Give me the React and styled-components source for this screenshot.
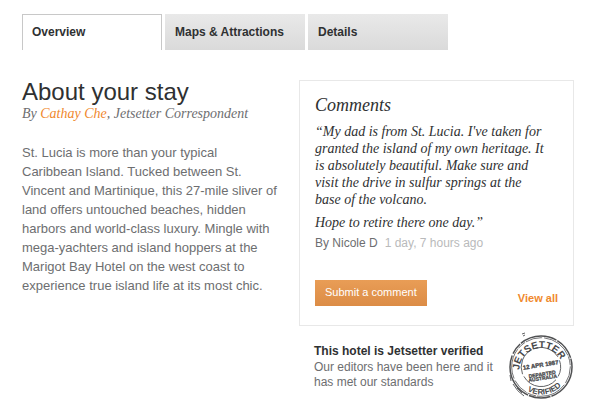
import { useState } from 'react';
import styled, { createGlobalStyle } from 'styled-components';

const GlobalStyle = createGlobalStyle`
  * {
    box-sizing: border-box;
  }

  body {
    margin: 0;
    background: #fff;
    color: #6d6e70;
    font-family: "Liberation Sans", Arial, sans-serif;
    font-size: 13px;
  }
`;

const Page = styled.div`
  padding: 14px 19px 0 22px;
`;

const TabList = styled.div`
  display: flex;
  gap: 3px;
`;

const Tab = styled.button`
  flex: 0 0 140px;
  height: 36px;
  padding: 0 9px 2px;
  border: 1px solid ${({ $active }) => ($active ? '#c8c8c8' : 'transparent')};
  border-bottom: 0;
  background: ${({ $active }) =>
    $active ? '#fff' : 'linear-gradient(#e9e9e9, #dadada) border-box'};
  color: #2f3132;
  font: bold 12px "Liberation Sans", Arial, sans-serif;
  text-align: left;
  cursor: pointer;
`;

const Columns = styled.main`
  display: grid;
  grid-template-columns: minmax(0, 1fr) 275px;
  gap: 16px;
  padding-top: 30px;
`;

const Title = styled.h1`
  margin: 0;
  color: #2f3132;
  font-size: 24px;
  font-weight: normal;
  line-height: 24px;
`;

const Byline = styled.p`
  margin: 0 0 19px;
  font: italic 14px/20px "Liberation Serif", serif;
`;

const AuthorLink = styled.a`
  color: #f0882d;
  text-decoration: none;
`;

const Intro = styled.p`
  margin: 0;
  line-height: 19px;
`;

const CommentsBox = styled.section`
  padding: 14px 15px 15px;
  border: 1px solid #e8e8e8;
`;

const CommentsTitle = styled.h2`
  margin: 0 0 8px;
  color: #2f3132;
  font: italic 18px/20px "Liberation Serif", serif;
`;

const Quote = styled.blockquote`
  margin: 0;
  color: #2f3132;
  font: italic 14px/17px "Liberation Serif", serif;

  p {
    margin: 0 0 6px;
  }

  p:last-child {
    margin-bottom: 4px;
  }
`;

const Meta = styled.p`
  margin: 0;
  font-size: 12px;
  line-height: 16px;
`;

const Time = styled.time`
  margin-left: 7px;
  color: #b9babb;
`;

const Actions = styled.div`
  display: flex;
  align-items: flex-end;
  justify-content: space-between;
  margin-top: 29px;
  padding-bottom: 4px;
`;

const SubmitButton = styled.button`
  height: 26px;
  padding: 0 10px 2px;
  border: 0;
  background: linear-gradient(#e99d56, #dc8c46);
  color: #fff;
  font: 11px "Liberation Sans", Arial, sans-serif;
  cursor: pointer;
`;

const ViewAll = styled.a`
  color: #f0882d;
  font-size: 11px;
  font-weight: bold;
  line-height: 16px;
  text-decoration: none;
`;

const Verified = styled.section`
  display: flex;
  justify-content: space-between;
  padding: 8px 0 0 15px;
`;

const VerifiedText = styled.div`
  padding-top: 10px;
  font-size: 12px;
  line-height: 15px;

  h3 {
    margin: 0 0 1px;
    color: #2f3132;
    font-size: 12px;
  }

  p {
    margin: 0;
  }
`;

const StampArt = styled.svg`
  flex: none;
  width: 66px;
  height: 66px;
  overflow: visible;
  font-family: "Liberation Sans", Arial, sans-serif;
  font-weight: bold;
  fill: #48494b;
`;

const Stamp = () => (
  <StampArt viewBox="0 0 66 66" role="img" aria-label="Jetsetter verified stamp">
    <defs>
      <path id="stamp-top" d="M11.4 36A21.8 21.8 0 0 1 54.8 33A21.8 21.8 0 0 1 33 54.8" />
      <path id="stamp-bottom" d="M19.3 57A27.6 27.6 0 0 0 60.6 33" />
    </defs>
    <g fill="none" stroke="#505153">
      <circle cx="33" cy="33" r="31" strokeWidth="1.5" strokeDasharray="38 1 22 1 47 2 12 1" />
      <circle cx="33" cy="33" r="29.3" strokeWidth="0.8" strokeDasharray="17 2 31 1 9 1" />
      <path
        d="M14.5 40.2A19.6 19.6 0 0 1 24 15.6M27 14.3A19.6 19.6 0 0 1 50 22.9M51.5 26.4A19.6 19.6 0 0 1 50.2 42.4M48 45.7A19.6 19.6 0 0 1 15.9 42.4"
        strokeWidth="0.9"
      />
      <path d="M2 41l1 6M5 50a33 33 0 0 0 11 12M9 54l5 5M14 0l3-1M15 2l2-1" strokeWidth="0.9" />
    </g>
    <text fontSize="10">
      <textPath href="#stamp-top">JETSETTER</textPath>
    </text>
    <text fontSize="8">
      <textPath href="#stamp-bottom">VERIFIED</textPath>
    </text>
    <g textAnchor="middle" transform="rotate(-9 33 33)" stroke="#48494b" strokeWidth="0.3">
      <text x="33" y="33" fontSize="6">12 APR 1987</text>
      <text x="33" y="42" fontSize="5">DEPARTED</text>
      <text x="33" y="46" fontSize="5">AUSTRALIA</text>
    </g>
  </StampArt>
);

const tabs = ['Overview', 'Maps & Attractions', 'Details'];

const App = () => {
  const [active, setActive] = useState('Overview');

  return (
    <Page>
      <GlobalStyle />
      <TabList role="tablist">
        {tabs.map((name) => (
          <Tab
            key={name}
            role="tab"
            aria-selected={name === active}
            $active={name === active}
            onClick={() => setActive(name)}
          >
            {name}
          </Tab>
        ))}
      </TabList>
      <Columns>
        <article>
          <Title>About your stay</Title>
          <Byline>
            By <AuthorLink href="#author">Cathay Che</AuthorLink>, Jetsetter Correspondent
          </Byline>
          <Intro>
            St. Lucia is more than your typical<br />
            Caribbean Island. Tucked between St.<br />
            Vincent and Martinique, this 27-mile sliver of<br />
            land offers untouched beaches, hidden<br />
            harbors and world-class luxury. Mingle with<br />
            mega-yachters and island hoppers at the<br />
            Marigot Bay Hotel on the west coast to<br />
            experience true island life at its most chic.
          </Intro>
        </article>
        <aside>
          <CommentsBox>
            <CommentsTitle>Comments</CommentsTitle>
            <Quote>
              <p>
                “My dad is from St. Lucia. I've taken for<br />
                granted the island of my own heritage. It<br />
                is absolutely beautiful. Make sure and<br />
                visit the drive in sulfur springs at the<br />
                base of the volcano.
              </p>
              <p>Hope to retire there one day.”</p>
            </Quote>
            <Meta>
              By Nicole D<Time>1 day, 7 hours ago</Time>
            </Meta>
            <Actions>
              <SubmitButton>Submit a comment</SubmitButton>
              <ViewAll href="#comments">View all</ViewAll>
            </Actions>
          </CommentsBox>
          <Verified>
            <VerifiedText>
              <h3>This hotel is Jetsetter verified</h3>
              <p>Our editors have been here and it has met our standards</p>
            </VerifiedText>
            <Stamp />
          </Verified>
        </aside>
      </Columns>
    </Page>
  );
};

export default App;
